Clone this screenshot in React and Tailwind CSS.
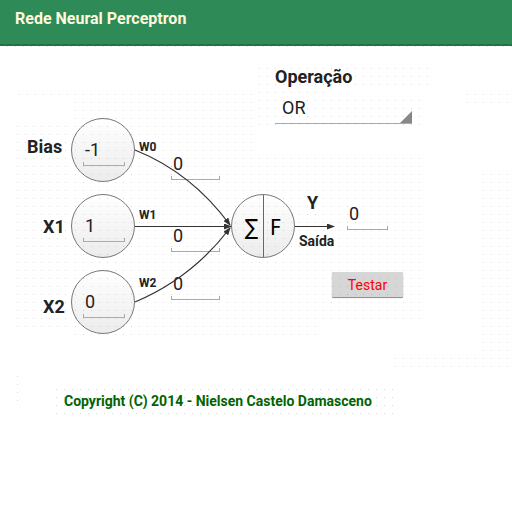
import { useState } from "react";

const dotAreas = [
  [7, 46, 505, 1],
  [19, 94, 233, 1],
  [75, 102, 177, 25],
  [17, 126, 49, 201],
  [75, 134, 177, 201],
  [259, 158, 161, 161],
  [259, 326, 57, 9],
  [259, 68, 169, 17],
  [259, 92, 65, 1],
  [259, 100, 161, 25],
  [467, 94, 41, 9],
  [483, 174, 29, 193],
  [395, 358, 81, 9],
  [17, 376, 1, 25],
  [56, 389, 337, 25],
];

function DotGrid() {
  return (
    <svg aria-hidden="true" className="pointer-events-none absolute inset-0" width="512" height="420">
      {dotAreas.map(([x, y, w, h], i) => (
        <g key={i}>
          <pattern id={`dots-${i}`} x={x} y={y} width="8" height="8" patternUnits="userSpaceOnUse">
            <rect width="1" height="1" fill="#000" fillOpacity="0.14" />
          </pattern>
          <rect x={x} y={y} width={w} height={h} fill={`url(#dots-${i})`} />
        </g>
      ))}
    </svg>
  );
}

function Field({ label, initial }) {
  const [value, setValue] = useState(initial);
  return (
    <div>
      <input
        aria-label={label}
        value={value}
        onChange={(e) => setValue(e.target.value)}
        className="block h-6 w-full bg-transparent px-[2px] text-lg leading-6 text-[#222] outline-none"
      />
      <div className="h-1 border border-t-0 border-[#aaa]" />
    </div>
  );
}

function InputNode({ label, initial }) {
  return (
    <div className="size-16 rounded-full border border-[#777] bg-linear-to-b from-white to-[#ececec] pt-[19px] pr-[9px] pl-[11px]">
      <Field label={label} initial={initial} />
    </div>
  );
}

function Edges() {
  return (
    <svg aria-hidden="true" className="pointer-events-none absolute inset-0" width="340" height="216">
      <defs>
        <marker id="head" markerWidth="8" markerHeight="6" refX="7" refY="3" orient="auto" markerUnits="userSpaceOnUse">
          <path d="M0 0L8 3L0 6Z" fill="#333" />
        </marker>
      </defs>
      <g fill="none" stroke="#333" strokeWidth="1.2">
        <path d="M135 32Q192 55 230 107" markerEnd="url(#head)" />
        <path d="M135 108.5H231" markerEnd="url(#head)" />
        <path d="M135 184Q192 160 230 110" markerEnd="url(#head)" />
        <path d="M295 108.5H334" markerEnd="url(#head)" />
      </g>
    </svg>
  );
}

export default function App() {
  const [operation, setOperation] = useState("OR");
  return (
    <div className="relative min-h-screen overflow-hidden bg-white font-['Roboto',sans-serif] text-[#222]">
      <header className="h-[46px] border-b-2 border-[#237346] bg-[#2e8b57] px-[15px] pt-[9px]">
        <h1 className="text-base leading-5 font-bold text-[#fff8dc]">Rede Neural Perceptron</h1>
      </header>

      <main>
        <div className="ml-[275px] flex w-[137px] flex-col pt-[19px]">
          <label htmlFor="operation" className="text-lg leading-6 font-bold">Operação</label>
          <div className="relative mt-[5px] border-b border-[#aaa] pb-px">
            <select
              id="operation"
              value={operation}
              onChange={(e) => setOperation(e.target.value)}
              className="block h-7 w-full appearance-none bg-transparent pl-[7px] text-lg leading-7 outline-none"
            >
              <option>OR</option>
              <option>AND</option>
            </select>
            <svg aria-hidden="true" className="pointer-events-none absolute right-0 bottom-0" width="12" height="12">
              <path d="M12 0V12H0Z" fill="#888" />
            </svg>
          </div>
        </div>

        <section aria-label="Perceptron" className="relative -mt-[6px] flex items-start">
          <div className="flex w-[71px] shrink-0 flex-col gap-14 pt-[17px] pl-[27px] text-lg leading-6 font-bold">
            <span>Bias</span>
            <span className="pl-4">X1</span>
            <span className="pl-4">X2</span>
          </div>

          <div className="flex shrink-0 flex-col gap-3">
            <InputNode label="Bias" initial="-1" />
            <InputNode label="X1" initial="1" />
            <InputNode label="X2" initial="0" />
          </div>

          <div className="flex w-9 shrink-0 flex-col gap-[52px] pt-[21px] pl-1 text-xs leading-4 font-bold">
            <span>W0</span>
            <span>W1</span>
            <span>W2</span>
          </div>

          <div className="flex w-[49px] shrink-0 flex-col pt-[34px]">
            <Field label="W0" initial="0" />
            <div className="mt-11 flex flex-col gap-5">
              <Field label="W1" initial="0" />
              <Field label="W2" initial="0" />
            </div>
          </div>

          <div className="mt-[76px] ml-[11px] flex size-16 shrink-0 overflow-hidden rounded-full border border-[#777] bg-linear-to-b from-white to-[#ececec] font-['DejaVu_Sans_Condensed','DejaVu_Sans',sans-serif] text-[22px] leading-[66px] text-black">
            <span className="w-8 border-r border-[#666] pr-[5px] text-right">∑</span>
            <span className="pl-[6px]">F</span>
          </div>

          <div className="flex w-[37px] shrink-0 flex-col items-start gap-4 pt-[73px] pl-1 font-bold">
            <span className="pl-2 text-lg leading-6">Y</span>
            <span className="text-sm leading-5">Saída</span>
          </div>

          <div className="flex w-[71px] shrink-0 flex-col gap-[42px] pt-[84px]">
            <div className="w-[56px] pl-[15px]">
              <Field label="Y" initial="0" />
            </div>
            <button
              type="button"
              className="h-[25px] rounded-[1px] bg-[#d6d6d6] text-sm leading-6 text-[#ff0000] shadow-[0_1px_1px_#888]"
            >
              Testar
            </button>
          </div>
          <Edges />
        </section>

        <footer className="pt-[57px] pl-16">
          <p className="text-sm leading-5 font-bold whitespace-nowrap text-[#006400]">
            Copyright (C) 2014 - Nielsen Castelo Damasceno
          </p>
        </footer>
      </main>
      <DotGrid />
    </div>
  );
}
